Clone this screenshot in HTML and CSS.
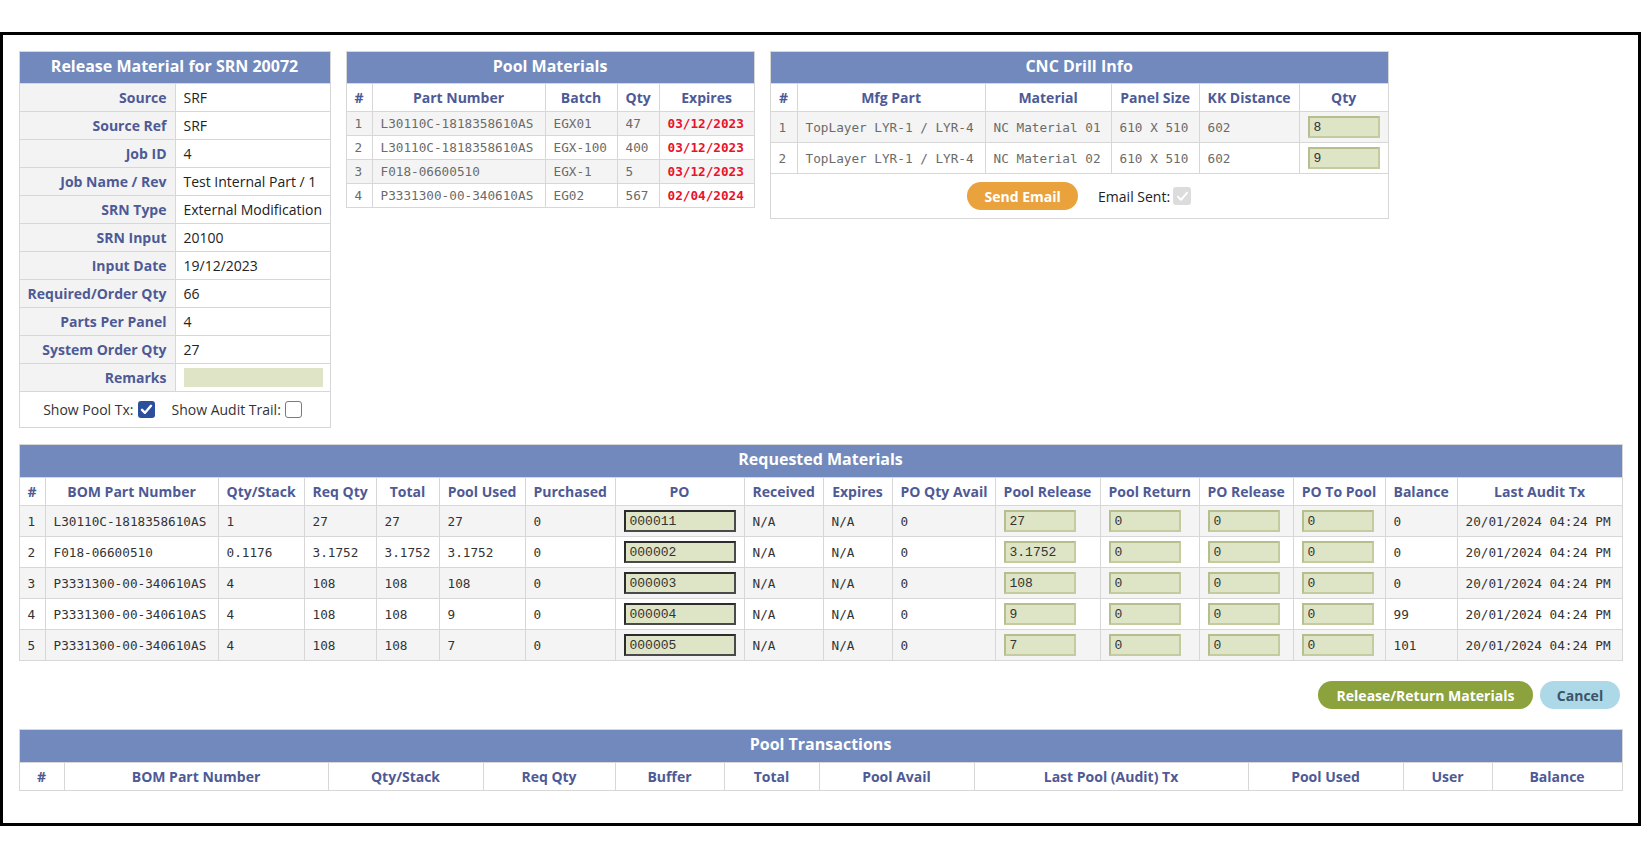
FILE: index.html
```html
<!DOCTYPE html>
<html lang="en">
<head>
<meta charset="utf-8">
<title>Release Material</title>
<link rel="stylesheet" href="styles.css">
</head>
<body>
<div class="frame">
  <div class="top-row">
    <table class="grid release">
      <colgroup><col><col></colgroup>
      <thead><tr><th colspan="2" class="title">Release Material for SRN 20072</th></tr></thead>
      <tbody>
        <tr><th class="lbl">Source</th><td>SRF</td></tr>
        <tr><th class="lbl">Source Ref</th><td>SRF</td></tr>
        <tr><th class="lbl">Job ID</th><td>4</td></tr>
        <tr><th class="lbl">Job Name / Rev</th><td>Test Internal Part / 1</td></tr>
        <tr><th class="lbl">SRN Type</th><td>External Modification</td></tr>
        <tr><th class="lbl">SRN Input</th><td>20100</td></tr>
        <tr><th class="lbl">Input Date</th><td>19/12/2023</td></tr>
        <tr><th class="lbl">Required/Order Qty</th><td>66</td></tr>
        <tr><th class="lbl">Parts Per Panel</th><td>4</td></tr>
        <tr><th class="lbl">System Order Qty</th><td>27</td></tr>
        <tr><th class="lbl">Remarks</th><td><span class="remarks"></span></td></tr>
        <tr class="opts">
          <td colspan="2">
            <div class="opts-inner">
              <span>Show Pool Tx:</span>
              <span class="cb cb-on"><svg viewBox="0 0 17 17" width="17" height="17"><path d="M4 8.8l3 3 6-7" fill="none" stroke="#fff" stroke-width="2.4" stroke-linecap="round" stroke-linejoin="round"/></svg></span>
              <span class="opt-gap">Show Audit Trail:</span>
              <span class="cb cb-off"></span>
            </div>
          </td>
        </tr>
      </tbody>
    </table>

    <table class="grid pool">
      <colgroup><col><col><col><col><col></colgroup>
      <thead>
        <tr><th colspan="5" class="title">Pool Materials</th></tr>
        <tr class="colhead"><th>#</th><th>Part Number</th><th>Batch</th><th>Qty</th><th>Expires</th></tr>
      </thead>
      <tbody class="mono light">
        <tr class="odd"><td>1</td><td>L30110C-1818358610AS</td><td>EGX01</td><td>47</td><td class="exp">03/12/2023</td></tr>
        <tr><td>2</td><td>L30110C-1818358610AS</td><td>EGX-100</td><td>400</td><td class="exp">03/12/2023</td></tr>
        <tr class="odd"><td>3</td><td>F018-06600510</td><td>EGX-1</td><td>5</td><td class="exp">03/12/2023</td></tr>
        <tr><td>4</td><td>P3331300-00-340610AS</td><td>EG02</td><td>567</td><td class="exp">02/04/2024</td></tr>
      </tbody>
    </table>

    <table class="grid cnc">
      <colgroup><col><col><col><col><col><col></colgroup>
      <thead>
        <tr><th colspan="6" class="title">CNC Drill Info</th></tr>
        <tr class="colhead"><th>#</th><th>Mfg Part</th><th>Material</th><th>Panel Size</th><th>KK Distance</th><th>Qty</th></tr>
      </thead>
      <tbody class="mono light">
        <tr class="odd"><td>1</td><td>TopLayer LYR-1 / LYR-4</td><td>NC Material 01</td><td>610 X 510</td><td>602</td><td><input class="inp" type="text" value="8"></td></tr>
        <tr><td>2</td><td>TopLayer LYR-1 / LYR-4</td><td>NC Material 02</td><td>610 X 510</td><td>602</td><td><input class="inp" type="text" value="9"></td></tr>
        <tr class="foot">
          <td colspan="6">
            <div class="foot-inner">
              <button class="btn btn-orange" type="button">Send Email</button>
              <span class="sent-label">Email Sent:</span>
              <span class="cb cb-dis"><svg viewBox="0 0 17 17" width="17" height="17"><path d="M4 8.8l3 3 6-7" fill="none" stroke="#fff" stroke-width="2" stroke-linecap="round" stroke-linejoin="round"/></svg></span>
            </div>
          </td>
        </tr>
      </tbody>
    </table>
  </div>

  <table class="grid req">
    <colgroup><col><col><col><col><col><col><col><col><col><col><col><col><col><col><col><col><col></colgroup>
    <thead>
      <tr><th colspan="17" class="title">Requested Materials</th></tr>
      <tr class="colhead"><th>#</th><th>BOM Part Number</th><th>Qty/Stack</th><th>Req Qty</th><th>Total</th><th>Pool Used</th><th>Purchased</th><th>PO</th><th>Received</th><th>Expires</th><th>PO Qty Avail</th><th>Pool Release</th><th>Pool Return</th><th>PO Release</th><th>PO To Pool</th><th>Balance</th><th>Last Audit Tx</th></tr>
    </thead>
    <tbody class="mono dark">
      <tr class="odd"><td>1</td><td>L30110C-1818358610AS</td><td>1</td><td>27</td><td>27</td><td>27</td><td>0</td><td><input class="inp inp-po" type="text" value="000011"></td><td>N/A</td><td>N/A</td><td>0</td><td><input class="inp" type="text" value="27"></td><td><input class="inp" type="text" value="0"></td><td><input class="inp" type="text" value="0"></td><td><input class="inp" type="text" value="0"></td><td>0</td><td>20/01/2024 04:24 PM</td></tr>
      <tr><td>2</td><td>F018-06600510</td><td>0.1176</td><td>3.1752</td><td>3.1752</td><td>3.1752</td><td>0</td><td><input class="inp inp-po" type="text" value="000002"></td><td>N/A</td><td>N/A</td><td>0</td><td><input class="inp" type="text" value="3.1752"></td><td><input class="inp" type="text" value="0"></td><td><input class="inp" type="text" value="0"></td><td><input class="inp" type="text" value="0"></td><td>0</td><td>20/01/2024 04:24 PM</td></tr>
      <tr class="odd"><td>3</td><td>P3331300-00-340610AS</td><td>4</td><td>108</td><td>108</td><td>108</td><td>0</td><td><input class="inp inp-po" type="text" value="000003"></td><td>N/A</td><td>N/A</td><td>0</td><td><input class="inp" type="text" value="108"></td><td><input class="inp" type="text" value="0"></td><td><input class="inp" type="text" value="0"></td><td><input class="inp" type="text" value="0"></td><td>0</td><td>20/01/2024 04:24 PM</td></tr>
      <tr><td>4</td><td>P3331300-00-340610AS</td><td>4</td><td>108</td><td>108</td><td>9</td><td>0</td><td><input class="inp inp-po" type="text" value="000004"></td><td>N/A</td><td>N/A</td><td>0</td><td><input class="inp" type="text" value="9"></td><td><input class="inp" type="text" value="0"></td><td><input class="inp" type="text" value="0"></td><td><input class="inp" type="text" value="0"></td><td>99</td><td>20/01/2024 04:24 PM</td></tr>
      <tr class="odd"><td>5</td><td>P3331300-00-340610AS</td><td>4</td><td>108</td><td>108</td><td>7</td><td>0</td><td><input class="inp inp-po" type="text" value="000005"></td><td>N/A</td><td>N/A</td><td>0</td><td><input class="inp" type="text" value="7"></td><td><input class="inp" type="text" value="0"></td><td><input class="inp" type="text" value="0"></td><td><input class="inp" type="text" value="0"></td><td>101</td><td>20/01/2024 04:24 PM</td></tr>
    </tbody>
  </table>

  <div class="actions">
    <button class="btn btn-green" type="button">Release/Return Materials</button>
    <button class="btn btn-blue" type="button">Cancel</button>
  </div>

  <table class="grid ptx">
    <colgroup><col><col><col><col><col><col><col><col><col><col><col></colgroup>
    <thead>
      <tr><th colspan="11" class="title">Pool Transactions</th></tr>
      <tr class="colhead"><th>#</th><th>BOM Part Number</th><th>Qty/Stack</th><th>Req Qty</th><th>Buffer</th><th>Total</th><th>Pool Avail</th><th>Last Pool (Audit) Tx</th><th>Pool Used</th><th>User</th><th>Balance</th></tr>
    </thead>
  </table>
</div>
</body>
</html>
```
FILE: styles.css
```css
* { box-sizing: border-box; }
html, body { margin: 0; padding: 0; background: #fff; }
body {
  font-family: "Open Sans", "DejaVu Sans", sans-serif;
  font-size: 14px;
  color: #222;
}

.frame {
  margin-top: 32px;
  border: 3px solid #000;
  padding: 16px 16px 32px 15.5px;
}

.top-row {
  display: flex;
  align-items: flex-start;
  gap: 15px;
  margin-bottom: 16px;
}

/* generic grid */
.grid {
  border-collapse: collapse;
  table-layout: fixed;
  background: #fff;
}
.grid th, .grid td {
  border: 1px solid #d7d7d7;
  padding: 0 8px;
  white-space: nowrap;
  overflow: hidden;
  text-align: left;
  font-weight: 400;
}
.grid .title {
  background: #7189bc;
  color: #fff;
  font-size: 16px;
  font-weight: 700;
  text-align: center;
  height: 32px;
  padding-bottom: 4px;
  border-color: #d7d7d7;
}
.colhead th {
  color: #4e5a95;
  font-weight: 700;
  text-align: center;
  height: 28px;
  padding-bottom: 1px;
  background: #fff;
}
.odd td { background: #f4f4f4; }

.mono td {
  font-family: "DejaVu Sans Mono", "Liberation Mono", monospace;
  font-size: 12.7px;
}
.light td { color: #6b6b6b; }
.dark td { color: #333; }
.grid .exp { color: #e8122c; font-weight: 700; }

/* release table */
.release { width: 311px; }
.release col:nth-child(1) { width: 156px; }
.release col:nth-child(2) { width: 155px; }
.release td { height: 28px; color: #222; }
.release .lbl {
  background: #f3f3f3;
  color: #4e5a95;
  text-align: right;
  font-weight: 700;
  height: 28px;
}
.remarks {
  display: block;
  width: 139px;
  height: 19px;
  background: #dfe4c7;
}
.opts td { height: 36px; padding: 0; }
.opts-inner {
  display: flex;
  align-items: center;
  justify-content: center;
  color: #333;
  padding-right: 4px;
}
.opts-inner .cb { margin-left: 4px; }
.opt-gap { margin-left: 17px; }

.cb {
  display: inline-flex;
  width: 17px;
  height: 17px;
  border-radius: 3px;
  align-items: center;
  justify-content: center;
}
.cb-on { background: #2b4f9c; }
.cb-off { background: #fff; border: 1px solid #7a7a7a; }
.cb-dis { background: #dcdcdc; width: 18px; height: 18px; }

/* pool table */
.pool { width: 408px; }
.pool col:nth-child(1) { width: 26px; }
.pool col:nth-child(2) { width: 173px; }
.pool col:nth-child(3) { width: 72px; }
.pool col:nth-child(4) { width: 42px; }
.pool col:nth-child(5) { width: 95px; }
.pool tbody td { height: 24px; }

/* cnc table */
.cnc { width: 618px; }
.cnc col:nth-child(1) { width: 27px; }
.cnc col:nth-child(2) { width: 188px; }
.cnc col:nth-child(3) { width: 126px; }
.cnc col:nth-child(4) { width: 88px; }
.cnc col:nth-child(5) { width: 100px; }
.cnc col:nth-child(6) { width: 89px; }
.cnc tbody td { height: 31px; }
.cnc .foot td { height: 45px; padding: 0; background: #fff; }
.foot-inner {
  display: flex;
  align-items: center;
  justify-content: center;
  font-family: "Open Sans", sans-serif;
  font-size: 14px;
  color: #222;
}
.sent-label { margin-left: 20px; margin-right: 3px; }

/* inputs */
.inp {
  display: block;
  width: 72px;
  height: 22px;
  margin: 0;
  padding: 0 4px;
  background: #dee4c6;
  border: 2px solid #c4cb9e;
  border-top-color: #b6be8e;
  border-left-color: #b6be8e;
  font-family: "Liberation Mono", "DejaVu Sans Mono", monospace;
  font-size: 13px;
  color: #333;
  outline: none;
}
.inp-po {
  width: 112px;
  border-color: #2c2c2c #4a4a4a #4a4a4a #2c2c2c;
}

/* buttons */
.btn {
  height: 28px;
  border: none;
  border-radius: 14px;
  font-family: "Open Sans", sans-serif;
  font-size: 14px;
  font-weight: 700;
  padding: 0 14px;
  cursor: pointer;
}
.btn-orange { background: #e9a23c; color: #fff; width: 111px; }
.btn-green { background: #8ca23c; color: #fff; width: 215px; }
.btn-blue { background: #acd8e8; color: #3e5466; width: 80px; }

.actions {
  display: flex;
  justify-content: flex-end;
  gap: 7px;
  margin-top: 20px;
  margin-bottom: 20px;
  padding-right: 2px;
}

/* requested */
.req { width: 100%; }
.req col:nth-child(1) { width: 26px; }
.req col:nth-child(2) { width: 173px; }
.req col:nth-child(3) { width: 86px; }
.req col:nth-child(4) { width: 72px; }
.req col:nth-child(5) { width: 63px; }
.req col:nth-child(6) { width: 86px; }
.req col:nth-child(7) { width: 90px; }
.req col:nth-child(8) { width: 129px; }
.req col:nth-child(9) { width: 79px; }
.req col:nth-child(10) { width: 69px; }
.req col:nth-child(11) { width: 103px; }
.req col:nth-child(12) { width: 105px; }
.req col:nth-child(13) { width: 99px; }
.req col:nth-child(14) { width: 94px; }
.req col:nth-child(15) { width: 92px; }
.req col:nth-child(16) { width: 72px; }
.req col:nth-child(17) { width: 165px; }
.req tbody td { height: 31px; }
.req .title, .ptx .title { height: 33px; }

/* pool transactions */
.ptx { width: 100%; }
.ptx col:nth-child(1) { width: 45px; }
.ptx col:nth-child(2) { width: 264px; }
.ptx col:nth-child(3) { width: 155px; }
.ptx col:nth-child(4) { width: 132px; }
.ptx col:nth-child(5) { width: 109px; }
.ptx col:nth-child(6) { width: 95px; }
.ptx col:nth-child(7) { width: 155px; }
.ptx col:nth-child(8) { width: 274px; }
.ptx col:nth-child(9) { width: 155px; }
.ptx col:nth-child(10) { width: 89px; }
.ptx col:nth-child(11) { width: 130px; }
```
